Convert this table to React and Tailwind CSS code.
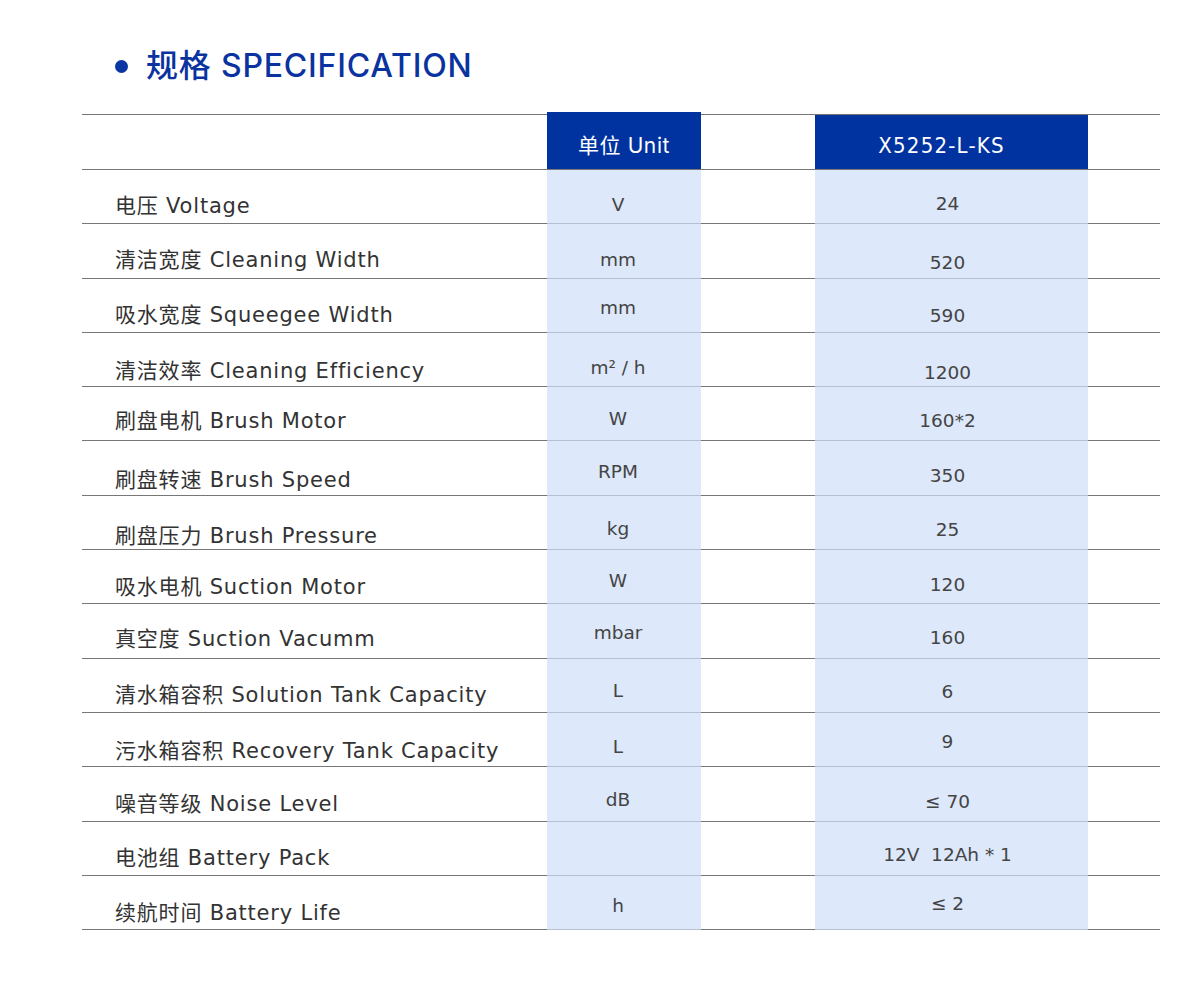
import React from 'react'

// pt classes nudge each cell's text the way the source sheet has it
const rows = [
  { label: '电压 Voltage', unit: 'V', value: '24', lp: 'pt-[24px]', up: 'pt-[23px]', vp: 'pt-[22px]' },
  { label: '清洁宽度 Cleaning Width', unit: 'mm', value: '520', lp: 'pt-[24px]', up: 'pt-[24px]', vp: 'pt-[27px]' },
  { label: '吸水宽度 Squeegee Width', unit: 'mm', value: '590', lp: 'pt-[24px]', up: 'pt-[17px]', vp: 'pt-[25px]' },
  { label: '清洁效率 Cleaning Efficiency', unit: 'm² / h', value: '1200', lp: 'pt-[26px]', up: 'pt-[23px]', vp: 'pt-[28px]' },
  { label: '刷盘电机 Brush Motor', unit: 'W', value: '160*2', lp: 'pt-[22px]', up: 'pt-[20px]', vp: 'pt-[22px]' },
  { label: '刷盘转速 Brush Speed', unit: 'RPM', value: '350', lp: 'pt-[27px]', up: 'pt-[19px]', vp: 'pt-[23px]' },
  { label: '刷盘压力 Brush Pressure', unit: 'kg', value: '25', lp: 'pt-[28px]', up: 'pt-[21px]', vp: 'pt-[22px]' },
  { label: '吸水电机 Suction Motor', unit: 'W', value: '120', lp: 'pt-[25px]', up: 'pt-[19px]', vp: 'pt-[23px]' },
  { label: '真空度 Suction Vacumm', unit: 'mbar', value: '160', lp: 'pt-[23px]', up: 'pt-[17px]', vp: 'pt-[22px]' },
  { label: '清水箱容积 Solution Tank Capacity', unit: 'L', value: '6', lp: 'pt-[24px]', up: 'pt-[20px]', vp: 'pt-[21px]' },
  { label: '污水箱容积 Recovery Tank Capacity', unit: 'L', value: '9', lp: 'pt-[26px]', up: 'pt-[22px]', vp: 'pt-[17px]' },
  { label: '噪音等级 Noise Level', unit: 'dB', value: '≤ 70', lp: 'pt-[25px]', up: 'pt-[21px]', vp: 'pt-[23px]' },
  { label: '电池组 Battery Pack', unit: '', value: '12V  12Ah * 1', lp: 'pt-[24px]', up: 'pt-[20px]', vp: 'pt-[21px]' },
  { label: '续航时间 Battery Life', unit: 'h', value: '≤ 2', lp: 'pt-[25px]', up: 'pt-[18px]', vp: 'pt-[16px]' },
]

const body = { fontFamily: '"DejaVu Sans", "Noto Sans CJK SC", sans-serif' }
const titleFont = { fontFamily: 'Inter, "Noto Sans CJK SC", sans-serif' }

export default function App() {
  return (
    <div className="w-[1200px] h-[1000px] bg-white" style={body}>
      {/* Title */}
      <div className="flex items-start pt-[44px] pl-[115px] h-[114px]">
        <span className="w-[13px] h-[13px] rounded-full bg-[#0a36a3] mt-[16px]" />
        <h2
          className="ml-[18px] text-[32px] leading-[44px] font-medium tracking-[0.8px] text-[#0a33a0]"
          style={titleFont}
        >
          规格 SPECIFICATION
        </h2>
      </div>

      {/* Table */}
      <div className="ml-[82px] w-[1078px]">
        {/* Header */}
        <div className="grid grid-cols-[465px_154px_114px_273px_72px] h-[56px] border-t border-b border-[#777]">
          <div />
          <div
            className="bg-[#0033a0] -mt-[3px] pt-[11px] flex items-center justify-center text-white text-[21px] tracking-[0.6px]"
            style={titleFont}
          >
            单位 Unit
          </div>
          <div />
          <div
            className="bg-[#0033a0] pt-[7px] pr-[20px] flex items-center justify-center text-white text-[22px] tracking-[1.2px]"
            style={{ fontFamily: '"DejaVu Sans Condensed", "DejaVu Sans", sans-serif' }}
          >
            X5252-L-KS
          </div>
          <div />
        </div>

        {rows.map((r, i) => (
          <div key={i} className="grid grid-cols-[465px_154px_114px_273px_72px] grid-rows-[54.3px] h-[54.3px] overflow-hidden">
            <div className={`border-b border-[#777] pl-[33px] ${r.lp} text-[21px] leading-[24px] tracking-[0.8px] text-[#333] whitespace-nowrap`}>
              {r.label}
            </div>
            <div className={`bg-[#dde8fb] border-b border-[#b4bfd0] ${r.up} pr-[12px] text-center text-[18.5px] leading-[24px] text-[#444]`}>
              {r.unit}
            </div>
            <div className="border-b border-[#777]" />
            <div className={`bg-[#dde8fb] border-b border-[#b4bfd0] ${r.vp} pr-[8px] text-center text-[18.5px] leading-[24px] text-[#444] whitespace-pre`}>
              {r.value}
            </div>
            <div className="border-b border-[#777]" />
          </div>
        ))}
      </div>
    </div>
  )
}
